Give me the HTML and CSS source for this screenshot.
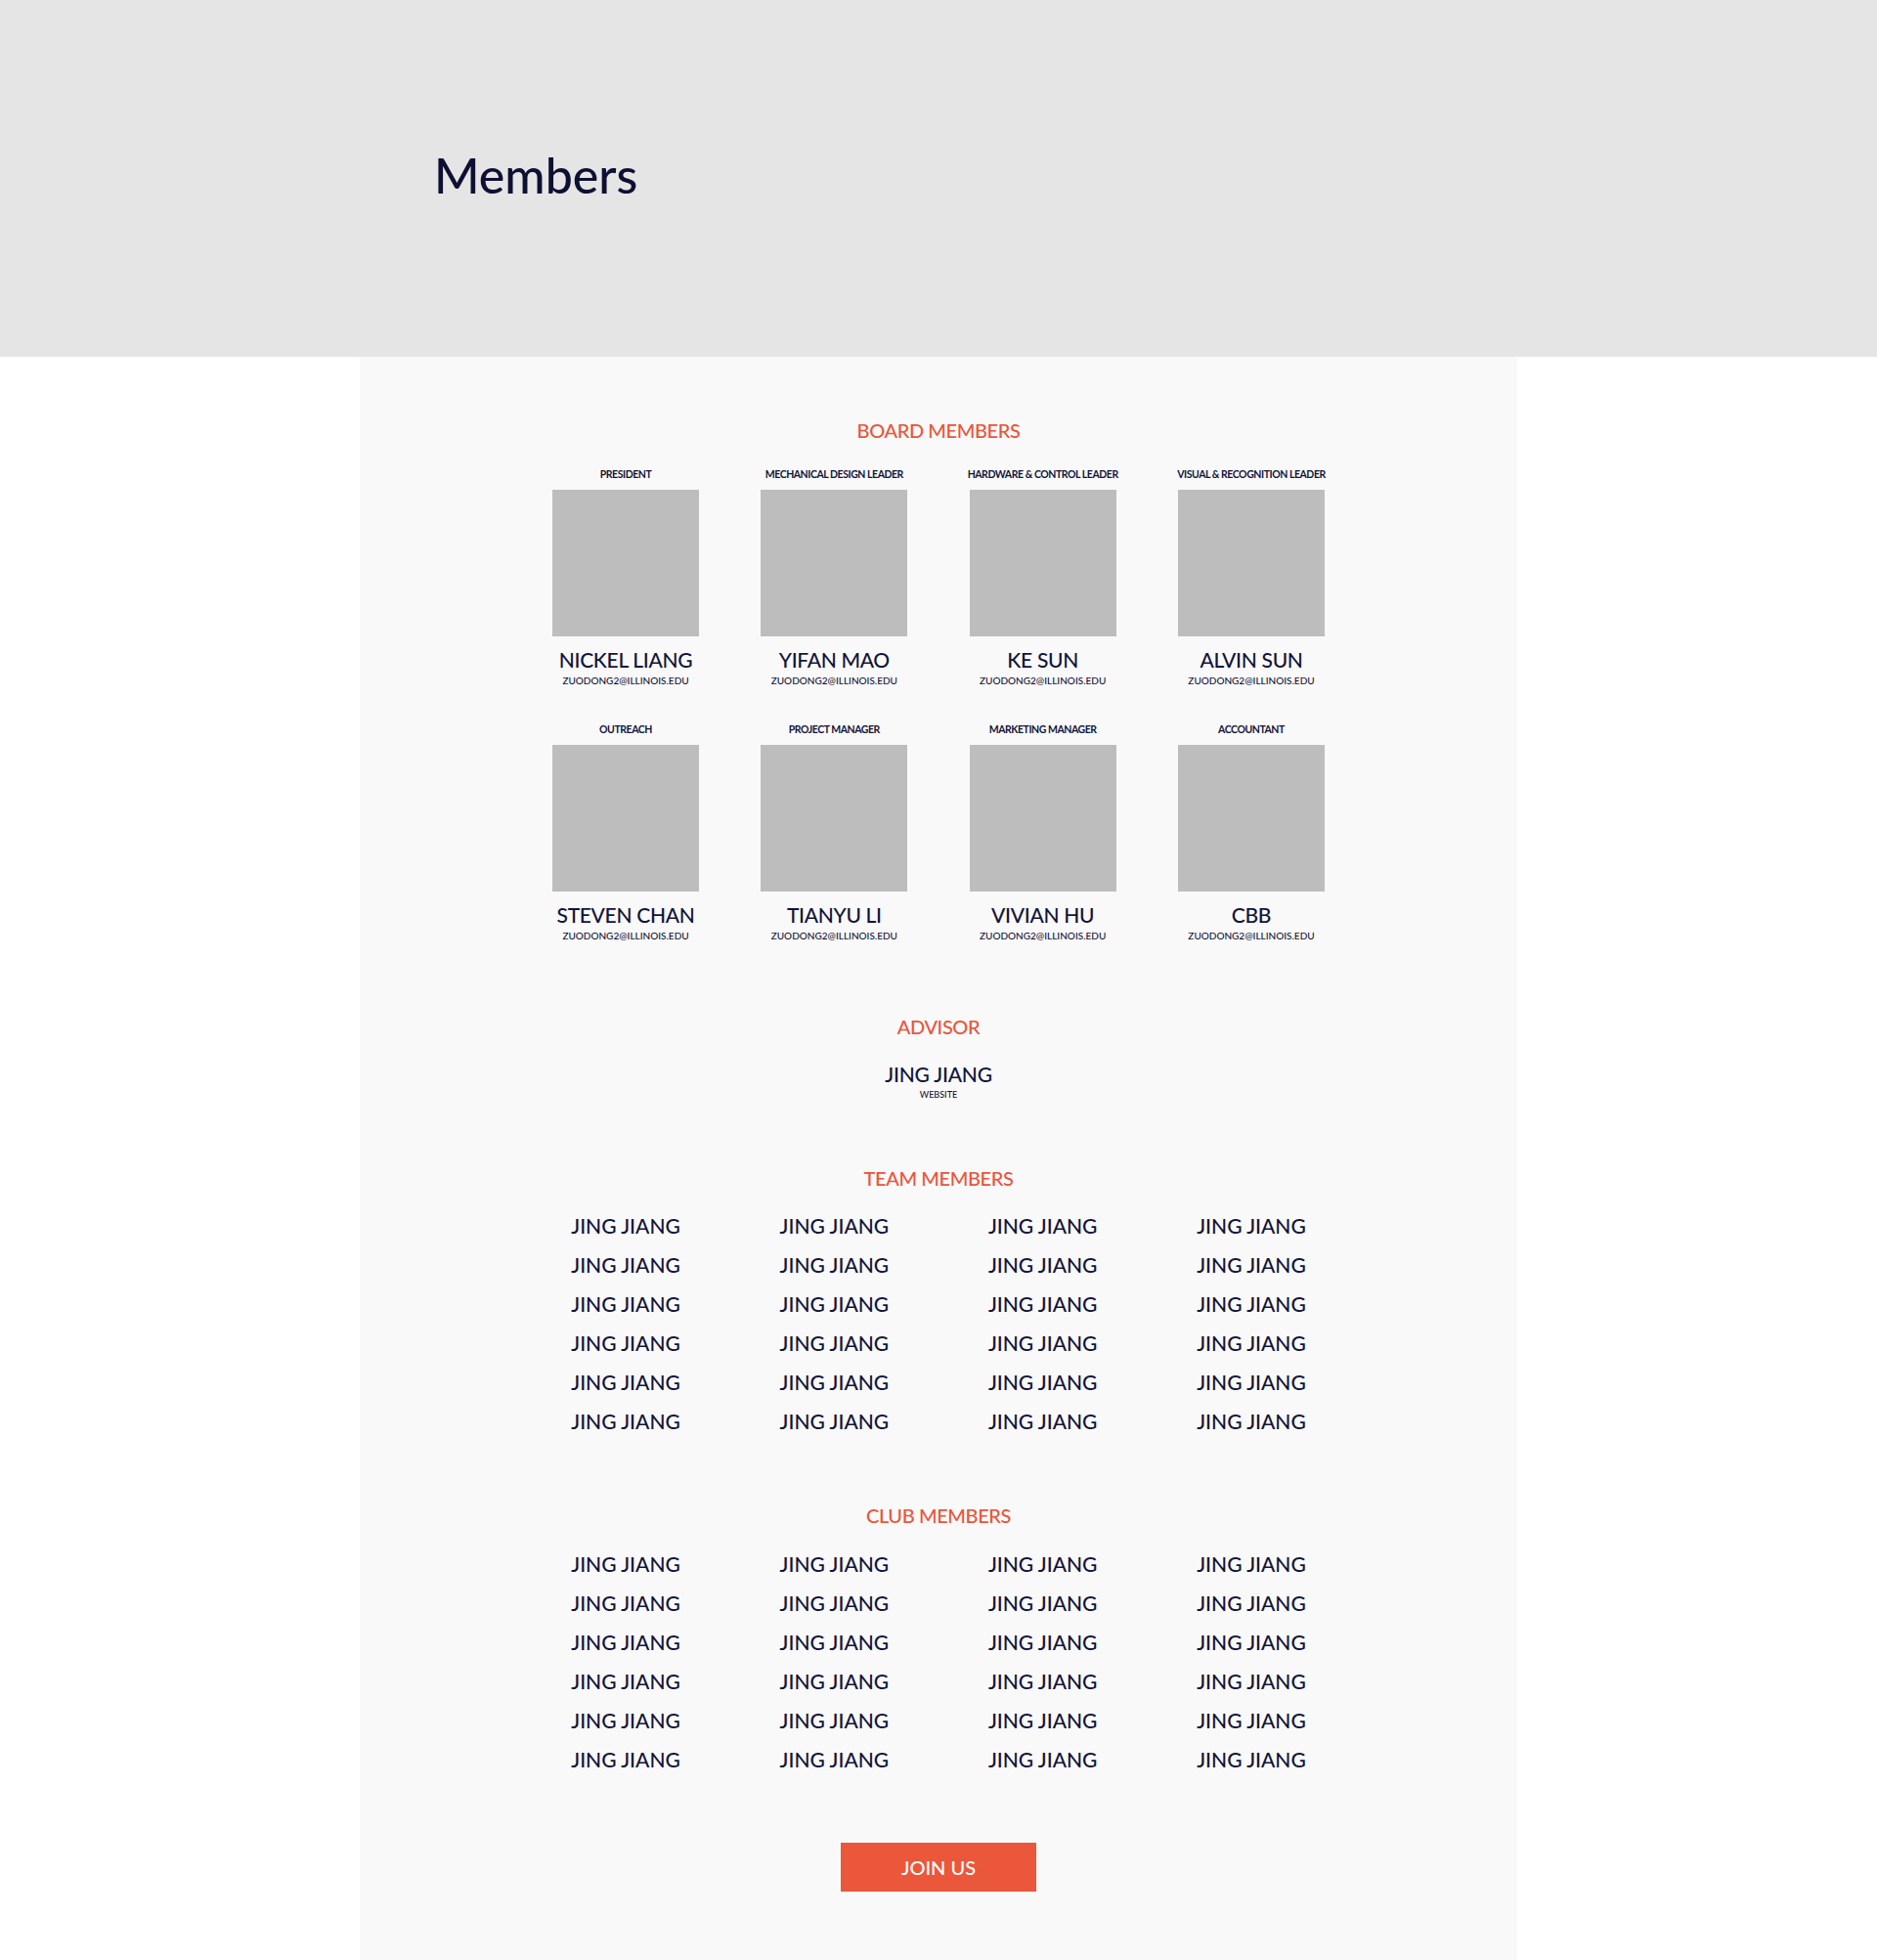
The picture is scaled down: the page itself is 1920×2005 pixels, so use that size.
FILE: index.html
```html
<!DOCTYPE html>
<html lang="en">
<head>
<meta charset="utf-8">
<title>Members</title>
<link rel="stylesheet" href="styles.css">
</head>
<body>
<header class="hero">
  <div class="hero-inner">
    <h1 class="hero-title">Members</h1>
  </div>
</header>
<main class="panel">
  <section class="board">
    <h2 class="section-title">BOARD MEMBERS</h2>
    <div class="board-grid">
      <div class="card"><div class="role">PRESIDENT</div><div class="photo"></div><div class="name">NICKEL LIANG</div><div class="email">ZUODONG2@ILLINOIS.EDU</div></div>
      <div class="card"><div class="role">MECHANICAL DESIGN LEADER</div><div class="photo"></div><div class="name">YIFAN MAO</div><div class="email">ZUODONG2@ILLINOIS.EDU</div></div>
      <div class="card"><div class="role">HARDWARE &amp; CONTROL LEADER</div><div class="photo"></div><div class="name">KE SUN</div><div class="email">ZUODONG2@ILLINOIS.EDU</div></div>
      <div class="card"><div class="role">VISUAL &amp; RECOGNITION LEADER</div><div class="photo"></div><div class="name">ALVIN SUN</div><div class="email">ZUODONG2@ILLINOIS.EDU</div></div>
      <div class="card"><div class="role">OUTREACH</div><div class="photo"></div><div class="name">STEVEN CHAN</div><div class="email">ZUODONG2@ILLINOIS.EDU</div></div>
      <div class="card"><div class="role">PROJECT MANAGER</div><div class="photo"></div><div class="name">TIANYU LI</div><div class="email">ZUODONG2@ILLINOIS.EDU</div></div>
      <div class="card"><div class="role">MARKETING MANAGER</div><div class="photo"></div><div class="name">VIVIAN HU</div><div class="email">ZUODONG2@ILLINOIS.EDU</div></div>
      <div class="card"><div class="role">ACCOUNTANT</div><div class="photo"></div><div class="name">CBB</div><div class="email">ZUODONG2@ILLINOIS.EDU</div></div>
    </div>
  </section>

  <section class="advisor">
    <h2 class="section-title">ADVISOR</h2>
    <div class="advisor-name">JING JIANG</div>
    <div class="advisor-link">WEBSITE</div>
  </section>

  <section class="team">
    <h2 class="section-title">TEAM MEMBERS</h2>
    <div class="name-grid">
      <div class="member">JING JIANG</div><div class="member">JING JIANG</div><div class="member">JING JIANG</div><div class="member">JING JIANG</div>
      <div class="member">JING JIANG</div><div class="member">JING JIANG</div><div class="member">JING JIANG</div><div class="member">JING JIANG</div>
      <div class="member">JING JIANG</div><div class="member">JING JIANG</div><div class="member">JING JIANG</div><div class="member">JING JIANG</div>
      <div class="member">JING JIANG</div><div class="member">JING JIANG</div><div class="member">JING JIANG</div><div class="member">JING JIANG</div>
      <div class="member">JING JIANG</div><div class="member">JING JIANG</div><div class="member">JING JIANG</div><div class="member">JING JIANG</div>
      <div class="member">JING JIANG</div><div class="member">JING JIANG</div><div class="member">JING JIANG</div><div class="member">JING JIANG</div>
    </div>
  </section>

  <section class="club">
    <h2 class="section-title">CLUB MEMBERS</h2>
    <div class="name-grid">
      <div class="member">JING JIANG</div><div class="member">JING JIANG</div><div class="member">JING JIANG</div><div class="member">JING JIANG</div>
      <div class="member">JING JIANG</div><div class="member">JING JIANG</div><div class="member">JING JIANG</div><div class="member">JING JIANG</div>
      <div class="member">JING JIANG</div><div class="member">JING JIANG</div><div class="member">JING JIANG</div><div class="member">JING JIANG</div>
      <div class="member">JING JIANG</div><div class="member">JING JIANG</div><div class="member">JING JIANG</div><div class="member">JING JIANG</div>
      <div class="member">JING JIANG</div><div class="member">JING JIANG</div><div class="member">JING JIANG</div><div class="member">JING JIANG</div>
      <div class="member">JING JIANG</div><div class="member">JING JIANG</div><div class="member">JING JIANG</div><div class="member">JING JIANG</div>
    </div>
  </section>

  <div class="cta">
    <a class="join-btn" href="#">JOIN US</a>
  </div>
</main>
</body>
</html>
```

FILE: styles.css
```css
* { box-sizing: border-box; }

html, body {
  margin: 0;
  padding: 0;
  background: #ffffff;
  font-family: "Lato", "Liberation Sans", sans-serif;
  color: #12143a;
}

.hero {
  height: 365px;
  background: #e5e5e5;
}

.hero-inner {
  width: 1032px;
  margin: 0 auto;
  padding-top: 154px;
}

.hero-title {
  margin: 0;
  font-size: 50px;
  line-height: 50px;
  font-weight: 500;
  color: #0e1033;
}

.panel {
  width: 1184px;
  margin: 0 auto;
  background: #f9f9f9;
  padding: 63px 0 70px;
  text-align: center;
}

.section-title {
  margin: 0;
  font-size: 20px;
  line-height: 24px;
  font-weight: 500;
  letter-spacing: -0.4px;
  color: #ea5539;
}

.board-grid {
  margin-top: 26px;
  display: grid;
  grid-template-columns: repeat(4, 213.33px);
  justify-content: center;
  row-gap: 37px;
}

.card {
  display: flex;
  flex-direction: column;
  align-items: center;
}

.role {
  font-size: 10.5px;
  line-height: 14px;
  font-weight: 700;
  letter-spacing: -0.45px;
  white-space: nowrap;
}

.photo {
  width: 150px;
  height: 150px;
  margin-top: 9px;
  background: #bdbdbd;
}

.name {
  margin-top: 11px;
  font-size: 21px;
  line-height: 26px;
  font-weight: 500;
  letter-spacing: -0.3px;
}

.email {
  margin-top: 2px;
  font-size: 10px;
  line-height: 12px;
  font-weight: 500;
}

.advisor {
  margin-top: 75px;
}

.advisor-name {
  margin-top: 24px;
  font-size: 21px;
  line-height: 26px;
  font-weight: 500;
  letter-spacing: -0.2px;
}

.advisor-link {
  margin-top: 2px;
  font-size: 9px;
  line-height: 12px;
  font-weight: 500;
}

.team {
  margin-top: 67px;
}

.club {
  margin-top: 64px;
}

.name-grid {
  margin-top: 17px;
  display: grid;
  grid-template-columns: repeat(4, 213.33px);
  grid-auto-rows: 40px;
  justify-content: center;
  align-items: center;
}

.club .name-grid {
  margin-top: 18px;
}

.member {
  font-size: 21px;
  line-height: 40px;
  font-weight: 500;
}

.cta {
  margin-top: 65px;
  display: flex;
  justify-content: center;
}

.join-btn {
  display: flex;
  align-items: center;
  justify-content: center;
  width: 200px;
  height: 50px;
  padding-bottom: 1px;
  background: #eb573a;
  color: #ffffff;
  font-size: 20px;
  font-weight: 500;
  text-decoration: none;
}
```
